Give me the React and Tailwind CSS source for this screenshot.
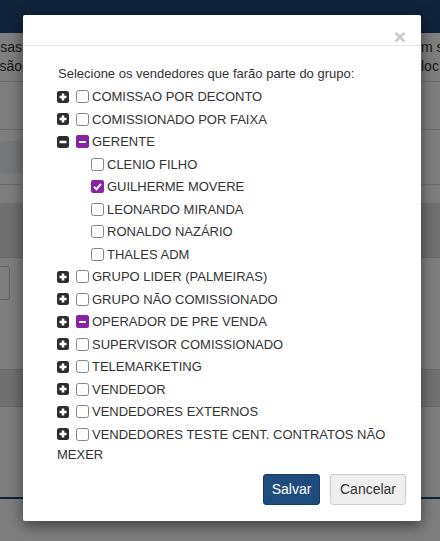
import React from 'react';

const groups = [
  { name: 'COMISSAO POR DECONTO' },
  { name: 'COMISSIONADO POR FAIXA' },
  {
    name: 'GERENTE',
    open: true,
    state: 'partial',
    children: [
      { name: 'CLENIO FILHO' },
      { name: 'GUILHERME MOVERE', checked: true },
      { name: 'LEONARDO MIRANDA' },
      { name: 'RONALDO NAZÁRIO' },
      { name: 'THALES ADM' },
    ],
  },
  { name: 'GRUPO LIDER (PALMEIRAS)' },
  { name: 'GRUPO NÃO COMISSIONADO' },
  { name: 'OPERADOR DE PRE VENDA', state: 'partial' },
  { name: 'SUPERVISOR COMISSIONADO' },
  { name: 'TELEMARKETING' },
  { name: 'VENDEDOR' },
  { name: 'VENDEDORES EXTERNOS' },
  { name: 'VENDEDORES TESTE CENT. CONTRATOS NÃO MEXER' },
];

function Toggle({ open }) {
  return (
    <svg width="12" height="12" viewBox="0 0 12 12" className="inline-block align-middle mr-[7px] -mt-[2px]">
      <rect x="0" y="0" width="12" height="12" rx="2.5" fill="#2d2d2d" />
      <rect x="2.5" y="4.75" width="7" height="2.5" fill="#fff" />
      {!open && <rect x="4.75" y="2.5" width="2.5" height="7" fill="#fff" />}
    </svg>
  );
}

function Check({ state }) {
  if (state === 'partial') {
    return (
      <span className="inline-flex items-center justify-center align-middle w-[13px] h-[13px] rounded-[2px] bg-[#8a22a6] mr-[3px] -mt-[2px]">
        <span className="block w-[7px] h-[2.5px] bg-white" />
      </span>
    );
  }
  if (state === 'checked') {
    return (
      <svg width="13" height="13" viewBox="0 0 13 13" className="inline-block align-middle mr-[3px] -mt-[2px]">
        <rect x="0" y="0" width="13" height="13" rx="2" fill="#8a22a6" />
        <path d="M3 6.8 L5.4 9.2 L10 3.8" stroke="#fff" strokeWidth="2" fill="none" />
      </svg>
    );
  }
  return (
    <span className="inline-block align-middle w-[13px] h-[13px] rounded-[2.5px] border border-[#858585] bg-white mr-[3px] -mt-[2px]" />
  );
}

function Background() {
  return (
    <div className="text-[14px] text-[#333]">
      <div className="h-[33px] bg-[#1f4677]" />
      <div className="h-[49px] border-b border-[#d4d4d4] flex pt-[5px] leading-[19px] whitespace-nowrap">
        <div className="w-[22px] overflow-hidden flex flex-col items-end">
          <span>sas</span>
          <span>são</span>
        </div>
        <div className="flex-1" />
        <div className="w-[19px] overflow-hidden flex flex-col">
          <span>m s</span>
          <span>loc</span>
        </div>
      </div>
      <div className="h-[48px] border-b border-[#d4d4d4]" />
      <div className="h-[55px] border-b border-[#d4d4d4] pt-[11px]">
        <div className="h-[33px] w-[200px] bg-[#eceef6]" />
      </div>
      <div className="h-[18px]" />
      <div className="h-[55px] bg-[#e0e0e0] border-b border-[#d2d2d2]" />
      <div className="h-[112px] border-b border-[#d4d4d4] pt-[8px]">
        <div className="h-[34px] w-[10px] border border-l-0 border-[#c4c4c4] rounded-r-[3px]" />
      </div>
      <div className="h-[37px] bg-[#e2e2e2] border-b border-[#d0d0d0]" />
      <div className="h-[90px]" />
      <div className="h-[2px] bg-[#1f4677]" />
    </div>
  );
}

export default function App() {
  return (
    <div className="relative h-[541px] overflow-hidden bg-white font-['Liberation_Sans',Arial,sans-serif]">
      <Background />

      <div className="absolute inset-0 bg-black/50" />

      <div className="absolute left-[23px] top-[15px] w-[398px] bg-white rounded-[2px] shadow-[0_5px_15px_rgba(0,0,0,0.5)] text-[#333]">
        <div className="h-[31px] border-b border-[#e5e5e5] flex justify-end items-end pr-[15px]">
          <span className="text-[21px] font-bold leading-none text-[#c8c8c8] translate-y-[2px]">×</span>
        </div>

        <div className="pl-[34px] pr-[15px] pt-[18px] text-[13px] leading-5">
          <p className="pl-[1px] mb-[2px]">Selecione os vendedores que farão parte do grupo:</p>
          <ul>
            {groups.map((g) => (
              <li key={g.name}>
                <div className="py-[1.25px]">
                  <Toggle open={g.open} />
                  <Check state={g.state} />
                  {g.name}
                </div>
                {g.open && (
                  <ul className="pl-[34px]">
                    {g.children.map((c) => (
                      <li key={c.name} className="py-[1.25px]">
                        <Check state={c.checked ? 'checked' : undefined} />
                        {c.name}
                      </li>
                    ))}
                  </ul>
                )}
              </li>
            ))}
          </ul>
        </div>

        <div className="flex justify-end gap-[10px] pt-[8px] pb-[16px] pr-[15px] text-[14px]">
          <button className="w-[57px] h-[31px] rounded-[3px] bg-[#1e4d7d] border border-[#173d63] text-white">
            Salvar
          </button>
          <button className="w-[76px] h-[31px] rounded-[3px] bg-[#eeeeee] border border-[#cccccc] text-[#333]">
            Cancelar
          </button>
        </div>
      </div>
    </div>
  );
}
